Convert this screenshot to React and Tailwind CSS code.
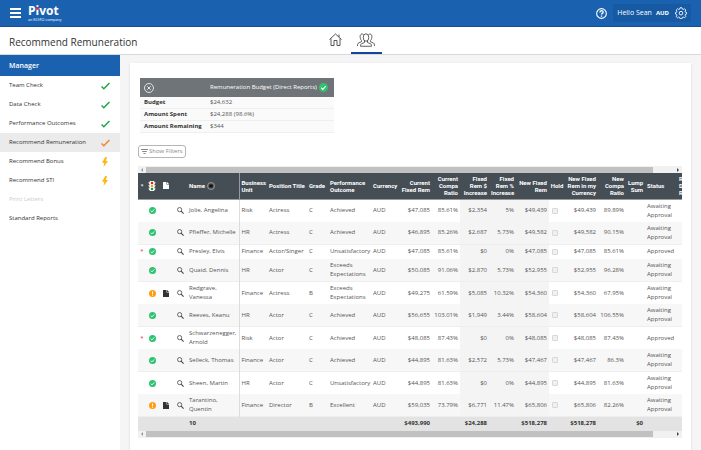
import { useState } from 'react';

const steps = [
  { label: 'Team Check', status: 'done' },
  { label: 'Data Check', status: 'done' },
  { label: 'Performance Outcomes', status: 'done' },
  { label: 'Recommend Remuneration', status: 'current' },
  { label: 'Recommend Bonus', status: 'pending' },
  { label: 'Recommend STI', status: 'pending' },
  { label: 'Print Letters', status: 'disabled' },
  { label: 'Standard Reports', status: 'none' },
];

const budget = [
  ['Budget', '$24,632'],
  ['Amount Spent', '$24,288 (98.6%)'],
  ['Amount Remaining', '$344'],
];

const employees = [
  { name: 'Jolie, Angelina', unit: 'Risk', title: 'Actress', grade: 'C', outcome: 'Achieved', rem: '$47,085', compa: '85.61%', inc: '$2,354', pct: '5%', newRem: '$49,439', newCompa: '89.89%', status: 'Awaiting Approval' },
  { name: 'Pfieffer, Michelle', unit: 'HR', title: 'Actress', grade: 'C', outcome: 'Achieved', rem: '$46,895', compa: '85.26%', inc: '$2,687', pct: '5.73%', newRem: '$49,582', newCompa: '90.15%', status: 'Awaiting Approval' },
  { name: 'Presley, Elvis', flag: true, unit: 'Finance', title: 'Actor/Singer', grade: 'C', outcome: 'Unsatisfactory', rem: '$47,085', compa: '85.61%', inc: '$0', pct: '0%', newRem: '$47,085', newCompa: '85.61%', status: 'Approved' },
  { name: 'Quaid, Dennis', unit: 'HR', title: 'Actor', grade: 'C', outcome: 'Exceeds Expectations', rem: '$50,085', compa: '91.06%', inc: '$2,870', pct: '5.73%', newRem: '$52,955', newCompa: '96.28%', status: 'Awaiting Approval' },
  { name: 'Redgrave, Vanessa', warn: true, unit: 'Finance', title: 'Actress', grade: 'B', outcome: 'Exceeds Expectations', rem: '$49,275', compa: '61.59%', inc: '$5,085', pct: '10.32%', newRem: '$54,360', newCompa: '67.95%', status: 'Awaiting Approval' },
  { name: 'Reeves, Keanu', unit: 'HR', title: 'Actor', grade: 'C', outcome: 'Achieved', rem: '$56,655', compa: '103.01%', inc: '$1,949', pct: '3.44%', newRem: '$58,604', newCompa: '106.55%', status: 'Awaiting Approval' },
  { name: 'Schwarzenegger, Arnold', flag: true, unit: 'Risk', title: 'Actor', grade: 'C', outcome: 'Achieved', rem: '$48,085', compa: '87.43%', inc: '$0', pct: '0%', newRem: '$48,085', newCompa: '87.43%', status: 'Approved' },
  { name: 'Selleck, Thomas', unit: 'Finance', title: 'Actor', grade: 'C', outcome: 'Achieved', rem: '$44,895', compa: '81.63%', inc: '$2,572', pct: '5.73%', newRem: '$47,467', newCompa: '86.3%', status: 'Awaiting Approval' },
  { name: 'Sheen, Martin', unit: 'HR', title: 'Actor', grade: 'C', outcome: 'Unsatisfactory', rem: '$44,895', compa: '81.63%', inc: '$0', pct: '0%', newRem: '$44,895', newCompa: '81.63%', status: 'Awaiting Approval' },
  { name: 'Tarantino, Quentin', warn: true, unit: 'Finance', title: 'Director', grade: 'B', outcome: 'Excellent', rem: '$59,035', compa: '73.79%', inc: '$6,771', pct: '11.47%', newRem: '$65,806', newCompa: '82.26%', status: 'Awaiting Approval' },
];

function Tick({ className }) {
  return (
    <svg viewBox="0 0 16 14" className={className} fill="none" stroke="currentColor" strokeWidth="2.6">
      <path d="M1 8l4 4L15 1.5" />
    </svg>
  );
}

function Bolt() {
  return (
    <svg viewBox="0 0 12 20" className="mr-0.5 w-1.5 h-2.5 text-[#fbb90f]" fill="currentColor">
      <path d="M6.5 0L0 11.5h4.5L3 20l9-12H7.5L10 0z" />
    </svg>
  );
}

function GoodBadge({ className }) {
  return (
    <svg viewBox="0 0 20 20" className={className}>
      <circle cx="10" cy="10" r="10" fill="#2ec46f" />
      <path d="M5 10.5l3.5 3.5L15 7" fill="none" stroke="#fff" strokeWidth="2.6" />
    </svg>
  );
}

function WarnBadge({ className }) {
  return (
    <svg viewBox="0 0 20 20" className={className}>
      <circle cx="10" cy="10" r="10" fill="#ff9d14" />
      <path d="M10 4v8M10 13.5v3" stroke="#fff" strokeWidth="2.6" />
    </svg>
  );
}

function Doc({ className }) {
  return (
    <svg viewBox="0 0 12 14" className={className} fill="currentColor">
      <path d="M0 0h7v5h5v9H0z" />
      <path d="M8 0l4 4H8z" />
    </svg>
  );
}

function TrafficLight() {
  return (
    <svg viewBox="0 0 16 20" className="mx-auto w-2 h-2.5">
      <path d="M0 3h16l-3 3H3zM0 9h16l-3 3H3zM0 15h16l-3 3H3z" fill="#fff" />
      <rect x="3" width="10" height="20" rx="2" fill="#fff" />
      <circle cx="8" cy="4" r="2.6" fill="#d9291c" />
      <circle cx="8" cy="10" r="2.6" fill="#f2a20c" />
      <circle cx="8" cy="16" r="2.6" fill="#1c9c46" />
    </svg>
  );
}

function Search() {
  return (
    <svg viewBox="0 0 16 16" className="w-[7px] h-[7px]" fill="none" stroke="#444" strokeWidth="1.800">
      <circle cx="6" cy="6" r="4.8" />
      <path d="M9.5 9.5L15 15" strokeWidth="2.4" />
    </svg>
  );
}

function ScrollBar() {
  return (
    <div className="flex items-center bg-[#f1f1f1] h-[7px]">
      <svg viewBox="0 0 8 8" className="w-2 h-1" fill="#999">
        <path d="M6 0v8L2 4z" />
      </svg>
      <div className="flex-1 h-1.5">
        <div className="bg-[#c1c1c1] w-[96%] h-full" />
      </div>
      <svg viewBox="0 0 8 8" className="w-2 h-1" fill="#444">
        <path d="M2 0v8l4-4z" />
      </svg>
    </div>
  );
}

function TopBar() {
  return (
    <header className="flex justify-between items-center bg-[#1a62b0] px-2.5 border-[#14508f] border-b h-[27px] text-white">
      <div className="flex items-center gap-[7px]">
        <button aria-label="Menu" className="flex flex-col gap-0.5">
          <span className="bg-white w-[11px] h-0.5" />
          <span className="bg-white w-[11px] h-0.5" />
          <span className="bg-white w-[11px] h-0.5" />
        </button>
        <a href="#home" className="block">
          <span className="block relative font-bold text-[12px] leading-[12px]">
            Pivot
            <span className="top-0.5 left-2 absolute bg-[#ee2b3b] rounded-full w-[3px] h-[3px]" />
          </span>
          <span className="block mt-px font-['Lato',sans-serif] text-[#e3edf8] text-[4px] leading-[4px]">an ELMO company</span>
        </a>
      </div>
      <div className="flex items-center gap-1.5">
        <button aria-label="Help">
          <svg viewBox="0 0 20 20" className="w-[11px] h-[11px]" fill="none" stroke="#fff" strokeWidth="2">
            <circle cx="10" cy="10" r="8.8" />
            <path d="M7 8c0-4 6-4 6-.5 0 2.300-3 2.200-3 4.500M10 13.500v2.500" strokeWidth="2.400" />
          </svg>
        </button>
        <button className="flex items-center gap-1 bg-[#175aa4] px-1 h-[18px] text-[7px]">
          <span className="font-medium">Hello Sean</span>
          <span className="font-bold text-[6px]">AUD</span>
          <svg viewBox="0 0 24 24" className="ml-0.5 w-3 h-3" fill="none" stroke="#fff" strokeWidth="1.800">
            <path d="M10 1.500h4l.6 2.700 2 .8 2.400-1.500 2.600 2.600-1.400 2.400.8 2 2.500.5v3l-2.500.6-.8 2 1.400 2.400-2.600 2.600-2.400-1.500-2 .8-.6 2.600h-4l-.6-2.600-2-.8L5 21.600 2.400 19l1.400-2.400-.8-2L.8 14v-3l2.200-.5.8-2L2.400 6.100 5 3.500 7.400 5l2-.8z" />
            <circle cx="12" cy="12.300" r="3.600" />
          </svg>
        </button>
      </div>
    </header>
  );
}

function TitleBar() {
  return (
    <div className="flex bg-white border-[#d9d9d9] border-b h-7">
      <div className="flex-1">
        <h1 className="pl-[9px] text-[#333] text-[10px] leading-[30px]">Recommend Remuneration</h1>
      </div>
      <nav className="flex text-[#444]">
        <a href="#home" aria-label="Home" className="flex justify-center items-center border-transparent border-b-2 w-[31px]">
          <svg viewBox="0 0 26 26" className="w-[13px] h-[13px]" fill="none" stroke="currentColor" strokeWidth="1.800">
            <path d="M1 13L13 2l12 11M4 11v14h6v-10h6v10h6V11M20 8V3" />
          </svg>
        </a>
        <a href="#team" aria-label="Team" className="flex justify-center items-center border-[#1544a0] border-b-2 w-[31px]">
          <svg viewBox="0 0 36 28" className="w-[18px] h-3.5" fill="none" stroke="currentColor" strokeWidth="1.700">
            <ellipse cx="18" cy="9" rx="5.500" ry="7.500" />
            <path d="M13 3C9 0 5 4 6.500 9.500 7 12.500 8 14 9 15v2.500L3 20c-1.500 1-2 3-2 6M23 3c4-3 8 1 6.500 6.500-.5 3-1.500 4.500-2.500 5.500v2.500l6 2.500c1.500 1 2 3 2 6" />
            <path d="M15 15.500V19l-6 2.500c-1.500.7-2 2-2 5h22c0-3-.5-4.300-2-5L21 19v-3.500" />
          </svg>
        </a>
      </nav>
      <div className="flex-1" />
    </div>
  );
}

function StepIcon({ status }) {
  if (status === 'done') return <Tick className="w-[9px] h-2 text-[#25a244]" />;
  if (status === 'current') return <Tick className="w-[9px] h-2 text-[#f58233]" />;
  if (status === 'pending') return <Bolt />;
  return null;
}

function Sidebar() {
  return (
    <aside className="bg-white w-[120px] shrink-0">
      <h2 className="bg-[#1a62b0] px-[9px] h-[21px] font-semibold text-[7px] text-white leading-[21px]">Manager</h2>
      <ul>
        {steps.map((step) => (
          <li key={step.label}>
            <a
              href="#step"
              className={`flex items-center justify-between pl-[9px] pr-2.5 h-[19px] text-[6px] font-medium ${
                step.status === 'current' ? 'bg-[#ebebeb]' : ''
              } ${step.status === 'disabled' ? 'text-[#c8ccd0]' : 'text-[#333]'}`}
            >
              {step.label}
              <StepIcon status={step.status} />
            </a>
          </li>
        ))}
      </ul>
    </aside>
  );
}

function BudgetCard() {
  return (
    <section className="ml-0.5 w-[194px] text-[6px]">
      <div className="flex items-center bg-[#6f7478] px-1 h-[19px] text-white">
        <button aria-label="Close" className="w-[66px]">
          <svg viewBox="0 0 20 20" className="w-2.5 h-2.5" fill="none" stroke="#fff" strokeWidth="1.600">
            <circle cx="10" cy="10" r="9" />
            <path d="M6.500 6.500l7 7M13.500 6.500l-7 7" />
          </svg>
        </button>
        <h3 className="flex-1 font-medium whitespace-nowrap">Remuneration Budget (Direct Reports)</h3>
        <GoodBadge className="mr-0.5 w-[9px] h-[9px]" />
      </div>
      <dl className="bg-[#fafafa]">
        {budget.map(([label, value]) => (
          <div key={label} className="flex items-center px-1 border-[#efefef] border-b h-3">
            <dt className="w-[66px] font-bold text-[#333]">{label}</dt>
            <dd className="text-[#555]">{value}</dd>
          </div>
        ))}
      </dl>
    </section>
  );
}

function EmployeeRow({ person }) {
  const [hold, setHold] = useState(false);

  return (
    <tr className="even:bg-[#f7f7f7] border-[#eeeeee] even:border-b h-[15px] [&>td]:py-0.5">
      <td className="text-[#e33] text-center">{person.flag && '*'}</td>
      <td>
        {person.warn ? <WarnBadge className="mx-auto w-[7px] h-[7px]" /> : <GoodBadge className="mx-auto w-[7px] h-[7px]" />}
      </td>
      <td>{person.warn && <Doc className="mx-auto w-1.5 h-[7px] text-[#333]" />}</td>
      <td className="pl-[3px]"><Search /></td>
      <td className="px-0.5 border-[#dcdcdc] border-r">{person.name}</td>
      <td className="px-0.5">{person.unit}</td>
      <td className="px-0.5 whitespace-nowrap">{person.title}</td>
      <td className="px-0.5">{person.grade}</td>
      <td className="px-0.5">{person.outcome}</td>
      <td className="px-0.5">AUD</td>
      <td className="px-0.5 text-right">{person.rem}</td>
      <td className="px-0.5 text-right">{person.compa}</td>
      <td className="bg-[#f4f4f4] px-0.5 text-right">{person.inc}</td>
      <td className="bg-[#f4f4f4] px-0.5 text-right">{person.pct}</td>
      <td className="bg-[#f4f4f4] px-0.5 text-right">{person.newRem}</td>
      <td className="pl-[3px]">
        <input
          type="checkbox"
          aria-label={`Hold ${person.name}`}
          checked={hold}
          onChange={() => setHold(!hold)}
          className="block bg-[#f0f0f0] checked:bg-[#1a62b0] border border-[#d8d8d8] rounded-[1px] w-1.5 h-1.5 appearance-none"
        />
      </td>
      <td className="px-0.5 text-right">{person.newRem}</td>
      <td className="px-0.5 text-right">{person.newCompa}</td>
      <td />
      <td className="px-0.5">{person.status}</td>
      <td />
    </tr>
  );
}

function RemunerationTable() {
  return (
    <div className="overflow-hidden">
      <table className="w-full min-w-[559px] text-[#555] text-[6px] leading-[9px] table-fixed">
        <colgroup>
          <col className="w-2" />
          <col className="w-3" />
          <col className="w-4" />
          <col className="w-[13px]" />
          <col className="w-[52px]" />
          <col className="w-7" />
          <col className="w-10" />
          <col className="w-[21px]" />
          <col className="w-[43px]" />
          <col className="w-[29px]" />
          <col className="w-8" />
          <col className="w-7" />
          <col className="w-[29px]" />
          <col className="w-[27px]" />
          <col className="w-[33px]" />
          <col className="w-4" />
          <col className="w-[33px]" />
          <col className="w-7" />
          <col className="w-[19px]" />
          <col className="w-8" />
          <col className="w-5" />
        </colgroup>
        <thead className="bg-[#454d55] text-white text-left leading-[7px]">
          <tr className="border-[#9a9a9a] border-b h-[26px] font-['Roboto',sans-serif]">
            <th className="text-center">*</th>
            <th><TrafficLight /></th>
            <th><Doc className="mx-auto w-1.5 h-[7px]" /></th>
            <th />
            <th className="px-0.5 border-[#9a9a9a] border-r">
              <span className="flex items-center gap-0.5">
                Name
                <svg viewBox="0 0 16 16" className="w-2 h-2" fill="none" stroke="#aaa" strokeWidth="1.500">
                  <circle cx="8" cy="8" r="7" fill="#555" />
                  <rect x="4.500" y="5" width="7" height="6" fill="#111" stroke="none" />
                </svg>
              </span>
            </th>
            <th className="px-0.5">Business Unit</th>
            <th className="px-0.5 whitespace-nowrap">Position Title</th>
            <th className="px-0.5">Grade</th>
            <th className="px-0.5">Performance Outcome</th>
            <th className="px-0.5">Currency</th>
            <th className="pr-0.5 text-right">Current Fixed Rem</th>
            <th className="px-0.5 text-right">Current Compa Ratio</th>
            <th className="px-0.5 text-right">Fixed Rem $ Increase</th>
            <th className="px-0.5 text-right">Fixed Rem % Increase</th>
            <th className="px-0.5 text-right">New Fixed Rem</th>
            <th className="text-center">Hold</th>
            <th className="px-0.5 text-right">New Fixed Rem in my Currency</th>
            <th className="px-0.5 text-right">New Compa Ratio</th>
            <th className="px-0.5 text-right">Lump Sum</th>
            <th className="px-0.5">Status</th>
            <th className="px-0.5">R<br />D<br />R</th>
          </tr>
        </thead>
        <tbody>
          {employees.map((person) => (
            <EmployeeRow key={person.name} person={person} />
          ))}
        </tbody>
        <tfoot className="bg-[#e3e3e3] font-bold text-[#333] text-right">
          <tr className="h-3.5">
            <td colSpan="4" />
            <td className="px-0.5 text-left">10</td>
            <td colSpan="5" />
            <td className="px-0.5">$493,990</td>
            <td />
            <td className="px-0.5">$24,288</td>
            <td />
            <td className="px-0.5">$518,278</td>
            <td />
            <td className="px-0.5">$518,278</td>
            <td />
            <td className="px-0.5">$0</td>
            <td colSpan="2" />
          </tr>
        </tfoot>
      </table>
    </div>
  );
}

export default function App() {
  return (
    <div className="flex flex-col bg-[#f5f5f5] min-h-screen font-['Open_Sans','Noto_Sans',sans-serif]">
      <TopBar />
      <TitleBar />
      <div className="flex flex-1">
        <Sidebar />
        <main className="flex-1 px-2.5 pt-2 min-w-0">
          <div className="bg-white shadow-sm pt-[15px] pr-[9px] pl-2 h-full">
            <BudgetCard />
            <button className="flex items-center gap-px mt-3 px-0.5 border border-[#b5b5b5] rounded-[3px] h-[13px] text-[#888] text-[6px]">
              <svg viewBox="0 0 14 12" className="w-[7px] h-1.5" stroke="#888" strokeWidth="2">
                <path d="M0 1h14M2.500 5h9M5 9h4" />
              </svg>
              Show Filters
            </button>
            <div className="mt-2">
              <ScrollBar />
              <RemunerationTable />
              <ScrollBar />
            </div>
          </div>
        </main>
      </div>
    </div>
  );
}
